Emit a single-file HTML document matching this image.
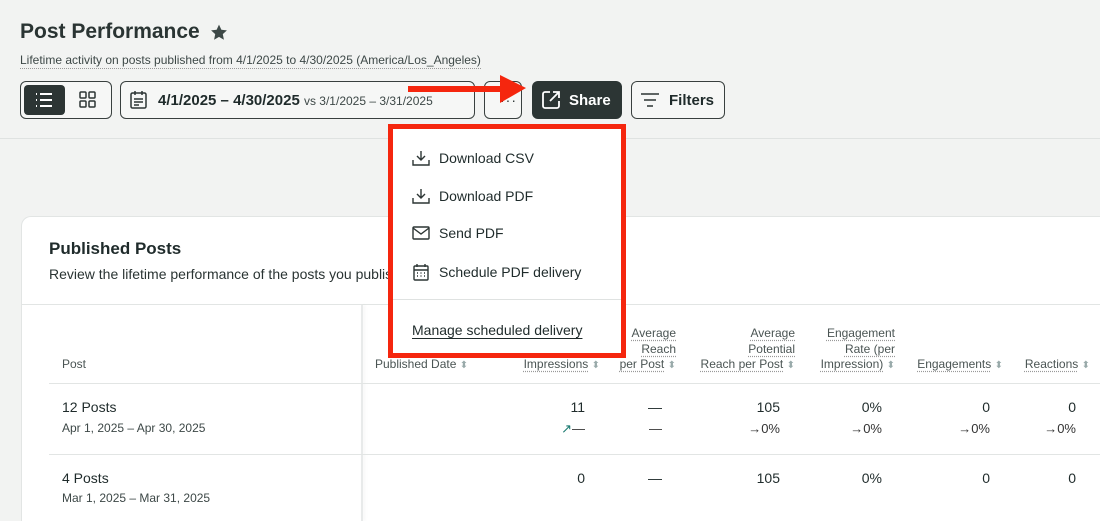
<!DOCTYPE html>
<html><head><meta charset="utf-8"><style>
*{box-sizing:border-box;margin:0;padding:0}
html{width:1100px;height:521px;overflow:hidden}
body{width:1100px;height:521px;overflow:hidden;background:#f2f3f2;font-family:"Liberation Sans",sans-serif;color:#1f2b2b;position:relative}
.abs{position:absolute}
.btn{position:absolute;border:1px solid #39403f;border-radius:6px;background:#f6f7f6;height:38px;top:81px}
.th{position:absolute;font-size:12px;color:#4a5453;text-align:right;line-height:15.5px;white-space:nowrap}
.th u{text-decoration:underline dotted #999;text-underline-offset:3px}
.s{color:#9aa;font-size:10px}
.num{position:absolute;font-size:14px;text-align:right;width:60px}
.sub{position:absolute;font-size:13px;text-align:right;width:60px;color:#333}
.mi{position:absolute;left:412px;font-size:14px;color:#1f2b2b;display:flex;align-items:center;gap:9px}
</style></head><body>
<div class="abs" style="left:20px;top:20px;font-size:21px;font-weight:bold;color:#2a3433">Post Performance</div>
<svg class="abs" style="left:209px;top:23px" width="20" height="19" viewBox="0 0 24 24"><path d="M12 2l3 6.5 7 .8-5.2 4.8 1.4 7L12 17.6 5.8 21.1l1.4-7L2 9.3l7-.8z" fill="#3d4847"/></svg>
<div class="abs" style="left:20px;top:53px;font-size:12px;color:#3d4847;border-bottom:1px dotted #999;line-height:15px">Lifetime activity on posts published from 4/1/2025 to 4/30/2025 (America/Los_Angeles)</div>
<div class="btn" style="left:20px;width:92px"></div>
<div class="abs" style="left:24px;top:85px;width:41px;height:30px;background:#2c3534;border-radius:4px"></div>
<svg class="abs" style="left:34px;top:91px" width="20" height="18" viewBox="0 0 20 18" fill="none" stroke="#fff" stroke-width="2"><path d="M2 3h1M6 3h12M2 9h1M6 9h12M2 15h1M6 15h12"/></svg>
<svg class="abs" style="left:79px;top:91px" width="17" height="17" viewBox="0 0 17 17" fill="none" stroke="#2c3534" stroke-width="1.5"><rect x="1" y="1" width="6" height="6" rx="1"/><rect x="10" y="1" width="6" height="6" rx="1"/><rect x="1" y="10" width="6" height="6" rx="1"/><rect x="10" y="10" width="6" height="6" rx="1"/></svg>
<div class="btn" style="left:120px;width:355px"></div>
<svg class="abs" style="left:130px;top:90px" width="17" height="19" viewBox="0 0 17 19" fill="none" stroke="#2c3534" stroke-width="1.5"><rect x="1" y="3" width="15" height="15" rx="1.5"/><path d="M5 1v4M12 1v4M4 9h9M4 12h9M4 15h5"/></svg>
<div class="abs" style="left:158px;top:92px;font-size:15px;font-weight:bold;white-space:nowrap">4/1/2025 – 4/30/2025 <span style="font-weight:normal;font-size:12px;color:#3d4847">vs 3/1/2025 – 3/31/2025</span></div>
<div class="btn" style="left:484px;width:38px"></div>
<div class="abs" style="left:500px;top:92px;font-size:14px;color:#2c3534;letter-spacing:1px">···</div>
<div class="abs" style="left:532px;top:81px;width:90px;height:38px;background:#2c3534;border-radius:6px"></div>
<svg class="abs" style="left:541px;top:90px" width="20" height="20" viewBox="0 0 20 20" fill="none" stroke="#fff" stroke-width="1.8"><path d="M9 2H4a2 2 0 0 0-2 2v12a2 2 0 0 0 2 2h12a2 2 0 0 0 2-2v-5M12 2h6v6M18 2L9 11"/></svg>
<div class="abs" style="left:569px;top:92px;font-size:15px;font-weight:bold;color:#fff">Share</div>
<div class="btn" style="left:631px;width:94px"></div>
<svg class="abs" style="left:640px;top:92px" width="20" height="16" viewBox="0 0 20 16" fill="none" stroke="#2c3534" stroke-width="1.5"><path d="M1 2h18M4 8h12M7 14h6"/></svg>
<div class="abs" style="left:669px;top:92px;font-size:15px;font-weight:bold">Filters</div>
<div class="abs" style="left:0;top:138px;width:1100px;height:1px;background:#dfe2e1"></div>
<div class="abs" style="left:408px;top:86px;width:96px;height:6px;background:#f5260e"></div>
<svg class="abs" style="left:498px;top:74px" width="30" height="30"><path d="M2 1L28 14 2 29z" fill="#f5260e"/></svg>
<div class="abs" style="left:21px;top:216px;width:1079px;height:305px;background:#fff;border:1px solid #e2e5e4;border-right:none;border-bottom:none;border-radius:10px 0 0 0"></div>
<div class="abs" style="left:49px;top:239px;font-size:17px;font-weight:bold">Published Posts</div>
<div class="abs" style="left:49px;top:266px;font-size:14px;color:#2a3433;white-space:nowrap">Review the lifetime performance of the posts you published during the selected time period.</div>
<div class="abs" style="left:22px;top:304px;width:1078px;height:1px;background:#e2e5e4"></div>
<div class="abs" style="left:361px;top:305px;width:2px;height:216px;background:#e8eaea;box-shadow:2px 0 3px rgba(0,0,0,.05)"></div>
<div class="abs" style="left:49px;top:383px;width:1051px;height:1px;background:#e2e5e4"></div>
<div class="abs" style="left:49px;top:454px;width:1051px;height:1px;background:#e2e5e4"></div>
<div class="th" style="left:62px;top:357px">Post</div>
<div class="th" style="left:375px;top:357px">Published Date <span class="s">⬍</span></div>
<div class="th" style="right:500px;top:357px"><u>Impressions</u> <span class="s">⬍</span></div>
<div class="th" style="right:424px;top:326px"><u>Average</u><br><u>Reach</u><br><u>per Post</u> <span class="s">⬍</span></div>
<div class="th" style="right:305px;top:326px"><u>Average</u><br><u>Potential</u><br><u>Reach per Post</u> <span class="s">⬍</span></div>
<div class="th" style="right:205px;top:326px"><u>Engagement</u><br><u>Rate (per</u><br><u>Impression)</u> <span class="s">⬍</span></div>
<div class="th" style="right:97px;top:357px"><u>Engagements</u> <span class="s">⬍</span></div>
<div class="th" style="right:10px;top:357px"><u>Reactions</u> <span class="s">⬍</span></div>
<div class="abs" style="left:62px;top:399px;font-size:14px">12 Posts</div>
<div class="abs" style="left:62px;top:421px;font-size:12px;color:#3d4847">Apr 1, 2025 – Apr 30, 2025</div>
<div class="abs" style="left:62px;top:470px;font-size:14px">4 Posts</div>
<div class="abs" style="left:62px;top:491px;font-size:12px;color:#3d4847">Mar 1, 2025 – Mar 31, 2025</div>
<div class="num" style="left:525px;top:399px">11</div><div class="num" style="left:602px;top:399px">—</div><div class="num" style="left:720px;top:399px">105</div><div class="num" style="left:822px;top:399px">0%</div><div class="num" style="left:930px;top:399px">0</div><div class="num" style="left:1016px;top:399px">0</div>
<div class="sub" style="left:525px;top:421px"><span style="color:#1a7a70">↗</span>—</div><div class="sub" style="left:602px;top:421px">—</div><div class="sub" style="left:720px;top:421px">→0%</div><div class="sub" style="left:822px;top:421px">→0%</div><div class="sub" style="left:930px;top:421px">→0%</div><div class="sub" style="left:1016px;top:421px">→0%</div>
<div class="num" style="left:525px;top:470px">0</div><div class="num" style="left:602px;top:470px">—</div><div class="num" style="left:720px;top:470px">105</div><div class="num" style="left:822px;top:470px">0%</div><div class="num" style="left:930px;top:470px">0</div><div class="num" style="left:1016px;top:470px">0</div>
<div class="abs" style="left:388px;top:124px;width:238px;height:234px;border:5px solid #f5260e;background:#fff"></div>
<div class="abs" style="left:393px;top:299px;width:228px;height:1px;background:#dfe2e1"></div>
<div class="mi" style="top:150px"><svg width="18" height="16" viewBox="0 0 18 16" fill="none" stroke="#2c3534" stroke-width="1.4"><path d="M9 1v9M5 6l4 4 4-4M1 10v5h16v-5"/></svg>Download CSV</div>
<div class="mi" style="top:188px"><svg width="18" height="16" viewBox="0 0 18 16" fill="none" stroke="#2c3534" stroke-width="1.4"><path d="M9 1v9M5 6l4 4 4-4M1 10v5h16v-5"/></svg>Download PDF</div>
<div class="mi" style="top:225px"><svg width="18" height="16" viewBox="0 0 18 16" fill="none" stroke="#2c3534" stroke-width="1.4"><rect x="1" y="2" width="16" height="12" rx="1"/><path d="M1 3l8 6 8-6"/></svg>Send PDF</div>
<div class="mi" style="top:263px"><svg width="18" height="18" viewBox="0 0 18 18" fill="none" stroke="#2c3534" stroke-width="1.4"><rect x="2" y="3" width="14" height="14" rx="1"/><path d="M5 1v3M13 1v3M2 7h14M5 10h1M8.5 10h1M12 10h1M5 13h1M8.5 13h1M12 13h1"/></svg>Schedule PDF delivery</div>
<div class="abs" style="left:412px;top:322px;font-size:14px;text-decoration:underline;text-underline-offset:3px">Manage scheduled delivery</div>
</body></html>
